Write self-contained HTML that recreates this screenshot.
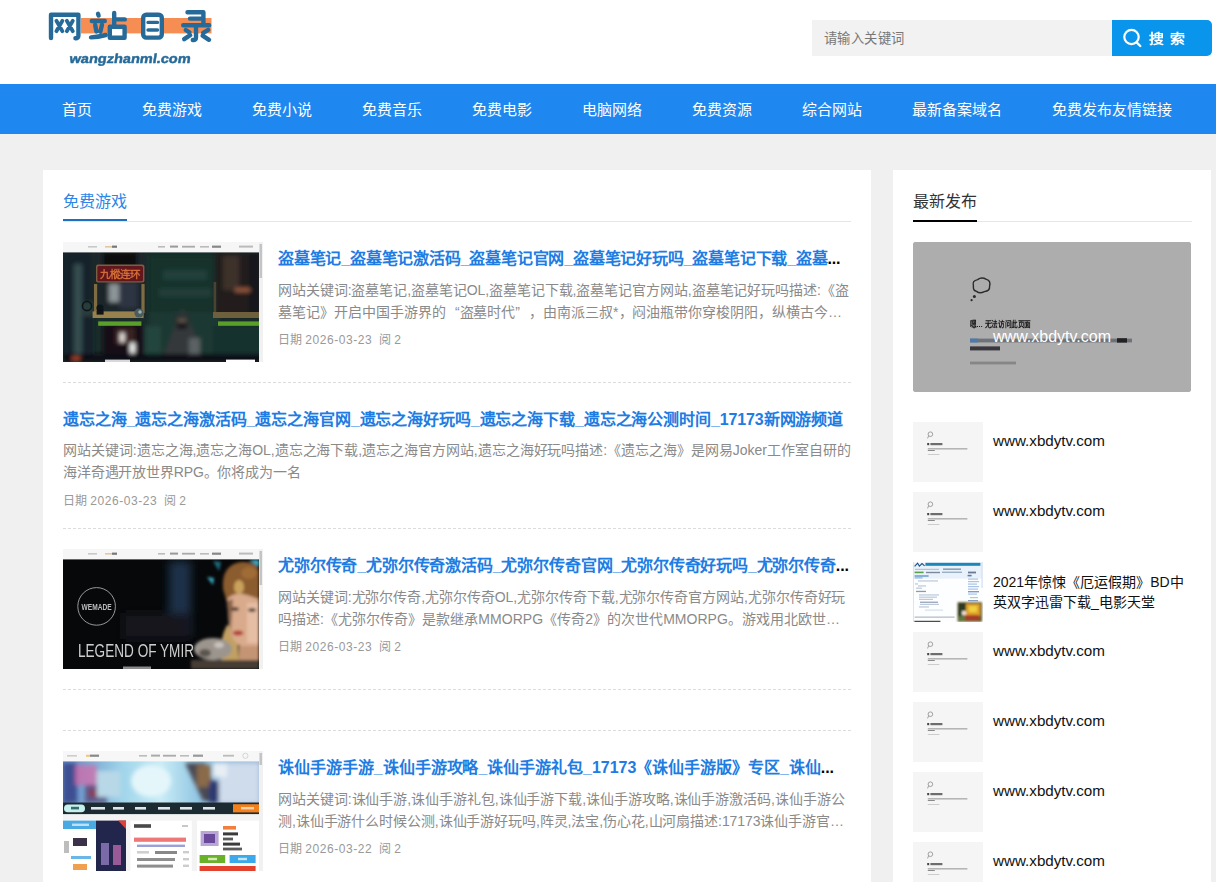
<!DOCTYPE html>
<html lang="zh-CN">
<head>
<meta charset="utf-8">
<title>网站目录</title>
<style>
*{box-sizing:border-box;margin:0;padding:0}
html,body{width:1216px;height:882px;overflow:hidden}
body{background:#f0f0f0;font-family:"Liberation Sans",sans-serif;color:#333;position:relative}
a{text-decoration:none;color:inherit}
.abs{position:absolute}
/* header */
#hd{position:absolute;left:0;top:0;width:1216px;height:84px;background:#fff}
#logo{position:absolute;left:40px;top:0;width:180px;height:76px}
#sin{position:absolute;left:812px;top:20px;width:300px;height:36px;background:#f2f2f2;color:#777;font-size:13.33px;line-height:37px;padding-left:12px;white-space:nowrap;letter-spacing:.4px}
#sbt{position:absolute;left:1112px;top:20px;width:100px;height:36px;background:#0a95ec;border-radius:0 5px 5px 0;color:#fff}
#sbt svg{position:absolute;left:10px;top:7px}
#sbt span{position:absolute;left:37px;top:1px;line-height:36px;font-size:15px;font-weight:bold;white-space:pre;word-spacing:1.5px;transform:scaleY(.86);transform-origin:50% 50%}
/* nav */
#nav{position:absolute;left:0;top:84px;width:1216px;height:50px;background:#1e87f0}
#nav a{position:absolute;top:1px;line-height:50px;font-size:15px;color:#fff;white-space:nowrap}
/* cards */
#main{position:absolute;left:43px;top:170px;width:828px;height:712px;background:#fff}
#side{position:absolute;left:893px;top:170px;width:318px;height:712px;background:#fff}
.hdg{margin-top:1px;position:absolute;font-size:16px;line-height:22px;white-space:nowrap}
.ttl{margin-top:1px;position:absolute;font-size:16px;font-weight:bold;line-height:32px;color:#000;white-space:nowrap;overflow:hidden}
.ttl a{color:#207ce2}
.dsc{position:absolute;font-size:14px;line-height:22px;color:#8a8a8a;white-space:nowrap;overflow:hidden}
.dt{position:absolute;font-size:12px;line-height:16px;color:#999;white-space:pre;margin-top:1px}
.dg{letter-spacing:.56px}
.q{display:inline-block;width:14px}
.dash{position:absolute;left:63px;width:788px;height:0;border-top:1px dashed #dcdcdc}
.th{position:absolute;left:913px;width:70px;height:60px;background:#f5f5f5;overflow:hidden}
.st{position:absolute;left:993px;font-size:15.2px;line-height:20px;margin-top:-1px;color:#111;white-space:nowrap}
.pic{position:absolute;left:63px;width:200px;height:120px;overflow:hidden}
</style>
</head>
<body>
<!-- HEADER -->
<div id="hd">
  <div id="logo"><svg width="180" height="76" viewBox="40 0 180 76" style="position:absolute;left:0;top:0">
<defs><filter id="lb" x="-5%" y="-5%" width="110%" height="110%"><feGaussianBlur stdDeviation="0.5"/></filter></defs>
<g filter="url(#lb)">
<rect x="81" y="18" width="130.5" height="15.4" fill="#f68d52"/>
<g fill="none" stroke="#286b99" stroke-width="4.4" stroke-linecap="round" stroke-linejoin="round">
<!-- 网 -->
<path d="M51 38 V14.7 H78.4 V35.4 Q78.4 38.4 75.4 38.2"/>
<path d="M56.4 20.8 L62.4 31.2 M62.4 20.8 L56.4 31.2 M66.8 20.8 L72.8 31.2 M72.8 20.8 L66.8 31.2" stroke-width="3.8"/>
<!-- 站 -->
<path d="M98 13.8 L98.6 15.6 M91.8 21 H104.8 M95.2 25 L96.4 31.4 M102 24.8 L100.4 31.6 M91 37.4 Q98 37 105.8 35"/>
<path d="M109.8 26.8 H124.6 V37.8 H109.8 Z" fill="#fff"/><path d="M114.2 13 V25.6 M114.2 19.4 H124.8"/>
<!-- 目 -->
<rect x="143.2" y="14.8" width="18.6" height="22.8" rx="3" fill="#fff"/>
<path d="M148 22.4 H157.5 M148 30 H157.5" stroke-width="3.4"/>
<!-- 录 -->
<path d="M187.5 12.2 H203.4 V24.6 M190 18.6 H203.4 M183.2 25.2 H209.2 M196 25.2 V37.5 Q196 40.4 192.8 40" />
<path d="M185.8 30 L189.4 32.4 M184.2 39.2 L190.2 35.2 M208.2 29.8 L203.2 32.8 M202.6 35.6 L209 39.8" />
</g>
<g transform="translate(69 62.5) skewX(-9) scale(1.12 1)"><text x="0" y="0" font-family="Liberation Sans, sans-serif" font-size="13" font-weight="bold" fill="#286b99" stroke="#286b99" stroke-width="0.45">wangzhanml.com</text></g>
</g>
</svg>
</div>
  <div id="sin">请输入关键词</div>
  <div id="sbt">
    <svg width="22" height="22" viewBox="0 0 22 22"><circle cx="9.5" cy="10" r="7.2" fill="none" stroke="#fff" stroke-width="2.2"/><path d="M14.6 15.4 L18.3 19" stroke="#fff" stroke-width="2.3" stroke-linecap="round"/></svg>
    <span>搜 索</span>
  </div>
</div>
<!-- NAV -->
<div id="nav">
  <a style="left:62px">首页</a>
  <a style="left:142px">免费游戏</a>
  <a style="left:252px">免费小说</a>
  <a style="left:362px">免费音乐</a>
  <a style="left:472px">免费电影</a>
  <a style="left:582px">电脑网络</a>
  <a style="left:692px">免费资源</a>
  <a style="left:802px">综合网站</a>
  <a style="left:912px">最新备案域名</a>
  <a style="left:1052px">免费发布友情链接</a>
</div>
<!-- CARDS -->
<div id="main"></div>
<div id="side"></div>

<!-- MAIN heading -->
<div class="hdg" style="left:63px;top:190px;color:#2a86e8">免费游戏</div>
<div class="abs" style="left:63px;top:221px;width:788px;height:1px;background:#e6e6e6"></div>
<div class="abs" style="left:63px;top:219px;width:64px;height:2px;background:#1c6fc2"></div>

<!-- ARTICLE 1 -->
<div class="pic" style="top:242px" id="p1"><svg width="200" height="120" viewBox="0 0 200 120" style="display:block">
<defs><filter id="b1" x="-3%" y="-3%" width="106%" height="106%"><feGaussianBlur stdDeviation="0.7"/></filter>
<filter id="b2" x="-10%" y="-10%" width="120%" height="120%"><feGaussianBlur stdDeviation="2"/></filter></defs>
<rect width="200" height="120" fill="#192d2b"/>
<g filter="url(#b2)">
<rect x="0" y="10" width="30" height="110" fill="#14242a"/>
<rect x="11" y="22" width="8" height="90" fill="#364d50"/>
<rect x="20" y="60" width="10" height="14" fill="#2c3c3e"/>
<rect x="32" y="10" width="50" height="62" fill="#1c252c"/>
<rect x="40" y="10" width="34" height="14" fill="#07090b"/>
<rect x="46" y="42" width="12" height="18" fill="#8c9498"/>
<rect x="56" y="40" width="18" height="26" fill="#2f3642"/>
<rect x="86" y="14" width="66" height="56" fill="#18312c"/>
<rect x="100" y="28" width="44" height="10" fill="#23403a"/>
<rect x="96" y="46" width="52" height="9" fill="#213e38"/>
<rect x="86" y="70" width="70" height="42" fill="#1b3731"/>
<rect x="82" y="84" width="16" height="28" fill="#22443c"/>
<rect x="150" y="84" width="50" height="30" fill="#18302e"/>
<rect x="152" y="10" width="46" height="64" fill="#221d1b"/>
<rect x="160" y="14" width="16" height="34" fill="#3e332b"/>
<rect x="186" y="12" width="12" height="60" fill="#14161c"/>
<rect x="172" y="46" width="15" height="4" fill="#96583e"/>
<rect x="40" y="82" width="40" height="36" fill="#171012"/>
<rect x="52" y="86" width="20" height="16" fill="#3a2220"/>
<rect x="57" y="91" width="4.6" height="9" fill="#f0e8e4"/>
<rect x="67" y="101" width="5" height="10" fill="#f2f2f2"/>
<path d="M119 66 L101 112 H138 L132 92 Z" fill="#34393b"/><rect x="126" y="96" width="11" height="16" fill="#5c6264"/>
<rect x="112" y="72" width="14" height="12" fill="#2a3032"/>
<rect x="114" y="80" width="10" height="7" fill="#15181a"/>
<rect x="115" y="77" width="8" height="3" fill="#6a5c50"/>
<rect x="0" y="112" width="200" height="8" fill="#0a1113"/>
<rect x="9" y="115" width="8" height="3.4" fill="#b8482a"/>
</g>
<g filter="url(#b1)">
<rect x="31" y="42" width="3.2" height="29" fill="#7f6c42"/><rect x="78.4" y="42" width="3.2" height="29" fill="#7f6c42"/>
<rect x="29.6" y="69.4" width="51" height="6.6" fill="#98814e"/>
<rect x="150" y="70" width="46" height="6" fill="#6e5f3c"/><rect x="150.6" y="40" width="2.6" height="30" fill="#4c4230"/>
<rect x="33" y="22.6" width="48.4" height="18" rx="2" fill="#7a5e44"/>
<rect x="34.4" y="24" width="45.6" height="15.2" rx="1.5" fill="#64181a"/>
<text x="57.2" y="35.8" font-size="10.5" font-weight="bold" text-anchor="middle" fill="#cf6c38" font-family="Liberation Sans, sans-serif">九樅连环</text>
<rect x="35.2" y="79.4" width="43.2" height="4.4" fill="#5a9f2c"/>
<rect x="155" y="79.4" width="41" height="4.4" fill="#5a9f2c"/>
<circle cx="37" cy="66" r="3.6" fill="#101214"/><rect x="33.6" y="68.6" width="7" height="4" fill="#101214"/><circle cx="76" cy="71" r="4.6" fill="#4c5c5e"/><circle cx="77" cy="70" r="1.8" fill="#9ab0b2"/>
<circle cx="24" cy="64" r="4.6" fill="none" stroke="#0e1618" stroke-width="1.6"/>
<rect x="0" y="0" width="200" height="10.4" fill="#f6f6f6"/>
<rect x="25" y="4" width="9" height="1.6" fill="#c8c8c8"/><rect x="42" y="4" width="7" height="1.6" fill="#e0c9a0"/><rect x="49" y="3.6" width="5" height="2.2" fill="#777"/>
<rect x="95" y="4" width="7" height="1.6" fill="#bbb"/><rect x="107" y="3.6" width="8" height="2" fill="#999"/><rect x="119" y="3.8" width="13" height="1.8" fill="#aaa"/><rect x="137" y="4" width="9" height="1.6" fill="#bbb"/><rect x="149" y="3.6" width="9" height="2.2" fill="#888"/>
<rect x="176" y="3.6" width="14" height="2" fill="#bbb"/>
<rect x="163" y="117.6" width="29" height="2.4" fill="#fff"/>
<rect x="42" y="117.6" width="25" height="2.4" fill="#d8d8d8"/>
<rect x="196" y="0" width="4" height="120" fill="#f1f1f1"/><rect x="196.5" y="2" width="2.5" height="34" fill="#c4c4c4"/>
</g>
</svg>
</div>
<div class="ttl" style="letter-spacing:-0.19px;left:278px;top:242px;width:573px"><a>盗墓笔记_盗墓笔记激活码_盗墓笔记官网_盗墓笔记好玩吗_盗墓笔记下载_盗墓</a>...</div>
<div class="dsc" style="letter-spacing:-0.072px;left:278px;top:279px;width:573px">网站关键词:盗墓笔记,盗墓笔记OL,盗墓笔记下载,盗墓笔记官方网站,盗墓笔记好玩吗描述:《盗</div>
<div class="dsc" style="letter-spacing:-0.041px;left:278px;top:301px;width:573px">墓笔记》开启中国手游界的<span class="q" style="text-align:right">“</span>盗墓时代<span class="q" style="text-align:left">”</span>，由南派三叔*，闷油瓶带你穿梭阴阳，纵横古今…</div>
<div class="dt" style="left:278px;top:331px">日期 <span class="dg">2026-03-23</span>  阅 2</div>
<div class="dash" style="top:382px"></div>

<!-- ARTICLE 2 -->
<div class="ttl" style="letter-spacing:-0.107px;left:63px;top:403px;width:788px"><a>遗忘之海_遗忘之海激活码_遗忘之海官网_遗忘之海好玩吗_遗忘之海下载_遗忘之海公测时间_17173新网游频道</a></div>
<div class="dsc" style="letter-spacing:-0.042px;left:63px;top:439px;width:788px">网站关键词:遗忘之海,遗忘之海OL,遗忘之海下载,遗忘之海官方网站,遗忘之海好玩吗描述:《遗忘之海》是网易Joker工作室自研的</div>
<div class="dsc" style="letter-spacing:-0.156px;left:63px;top:461px;width:788px">海洋奇遇开放世界RPG。你将成为一名</div>
<div class="dt" style="left:63px;top:492px">日期 <span class="dg">2026-03-23</span>  阅 2</div>
<div class="dash" style="top:528px"></div>

<!-- ARTICLE 3 -->
<div class="pic" style="top:549px" id="p3"><svg width="200" height="120" viewBox="0 0 200 120" style="display:block">
<defs><filter id="c1" x="-3%" y="-3%" width="106%" height="106%"><feGaussianBlur stdDeviation="0.6"/></filter>
<filter id="c2" x="-15%" y="-15%" width="130%" height="130%"><feGaussianBlur stdDeviation="1.5"/></filter>
<filter id="c3" x="-15%" y="-15%" width="130%" height="130%"><feGaussianBlur stdDeviation="5"/></filter></defs>
<rect width="200" height="120" fill="#07080a"/>
<g filter="url(#c3)">
<rect x="106" y="12" width="22" height="76" fill="#1f3348"/>
<rect x="60" y="64" width="66" height="26" fill="#14171c"/>
</g>
<g filter="url(#c2)">
<path d="M144 28 L150 36 L151 29 Z" fill="#3ab0c8"/><path d="M186 11 H196 V18 Z" fill="#3ab0c8"/><path d="M150 12 L156 22 L158 13 Z" fill="#1f6a80"/>
<path d="M160 40 Q158 16 178 13 Q194 12 196 22 V50 L180 46 L166 60 Z" fill="#8a5c2e"/>
<ellipse cx="176" cy="38" rx="5" ry="7" fill="#caa25c"/>
<ellipse cx="186" cy="24" rx="8" ry="6" fill="#a06c34"/>
<path d="M164 76 Q156 90 158 111 H176 L174 80 Z" fill="#c2a062"/>
<path d="M164 50 Q172 42 184 46 L196 50 V100 L178 98 Q168 92 166 76 Z" fill="#d9aa8c"/>
<rect x="184" y="54" width="12" height="40" fill="#e6bea4"/>
<path d="M164 52 L170 50 L168 84 Z" fill="#8a6248"/>
<ellipse cx="172" cy="60" rx="4" ry="1.8" fill="#3a2c22"/><ellipse cx="189" cy="61" rx="4" ry="1.8" fill="#3a2c22"/>
<ellipse cx="175" cy="84" rx="5.4" ry="2.4" fill="#b23a30"/>
<rect x="176" y="97" width="20" height="14" fill="#c49474"/>
<ellipse cx="150" cy="100" rx="19" ry="11" fill="#9c958e"/>
<ellipse cx="142" cy="104" rx="6" ry="4" fill="#5a544e"/><ellipse cx="156" cy="96" rx="5" ry="3" fill="#c8c2bc"/>
<rect x="128" y="111" width="68" height="9" fill="#463d36"/>
</g>
<g filter="url(#c1)">
<circle cx="33.6" cy="57.4" r="18.8" fill="none" stroke="#a8a8a8" stroke-width="0.9"/>
<text x="33.6" y="61" font-size="9.5" font-weight="bold" text-anchor="middle" fill="#bdbdbd" font-family="Liberation Sans, sans-serif" textLength="30" lengthAdjust="spacingAndGlyphs">WEMADE</text>
<text x="15" y="108" font-size="18.5" fill="#cfcfcf" font-family="Liberation Sans, sans-serif" textLength="116" lengthAdjust="spacingAndGlyphs">LEGEND OF YMIR</text>
<rect x="60" y="117.5" width="28" height="2.5" fill="#8a8a8a"/>
<rect x="0" y="0" width="200" height="10.4" fill="#f6f6f6"/>
<rect x="25" y="4" width="9" height="1.6" fill="#c8c8c8"/><rect x="42" y="4" width="7" height="1.6" fill="#e0c9a0"/><rect x="49" y="3.6" width="5" height="2.2" fill="#777"/>
<rect x="95" y="4" width="7" height="1.6" fill="#bbb"/><rect x="107" y="3.6" width="8" height="2" fill="#999"/><rect x="119" y="3.8" width="13" height="1.8" fill="#aaa"/><rect x="137" y="4" width="9" height="1.6" fill="#bbb"/><rect x="149" y="3.6" width="9" height="2.2" fill="#888"/>
<rect x="176" y="3.6" width="14" height="2" fill="#bbb"/>
<rect x="196" y="0" width="4" height="120" fill="#f1f1f1"/><rect x="196.5" y="2" width="2.5" height="34" fill="#c4c4c4"/>
</g>
</svg>
</div>
<div class="ttl" style="letter-spacing:-0.155px;left:278px;top:549px;width:573px"><a>尤弥尔传奇_尤弥尔传奇激活码_尤弥尔传奇官网_尤弥尔传奇好玩吗_尤弥尔传奇</a>...</div>
<div class="dsc" style="letter-spacing:-0.06px;left:278px;top:586px;width:573px">网站关键词:尤弥尔传奇,尤弥尔传奇OL,尤弥尔传奇下载,尤弥尔传奇官方网站,尤弥尔传奇好玩</div>
<div class="dsc" style="letter-spacing:0.03px;left:278px;top:608px;width:573px">吗描述:《尤弥尔传奇》是款继承MMORPG《传奇2》的次世代MMORPG。游戏用北欧世…</div>
<div class="dt" style="left:278px;top:638px">日期 <span class="dg">2026-03-23</span>  阅 2</div>
<div class="dash" style="top:689px"></div>
<div class="dash" style="top:730px"></div>

<!-- ARTICLE 4 -->
<div class="pic" style="top:751px" id="p4"><svg width="200" height="120" viewBox="0 0 200 120" style="display:block">
<defs><filter id="d1" x="-3%" y="-3%" width="106%" height="106%"><feGaussianBlur stdDeviation="0.6"/></filter>
<filter id="d2" x="-15%" y="-15%" width="130%" height="130%"><feGaussianBlur stdDeviation="2.2"/></filter>
<linearGradient id="sky" x1="0" x2="1"><stop offset="0" stop-color="#5f86c0"/><stop offset="0.3" stop-color="#9fd4ea"/><stop offset="0.5" stop-color="#c9ecf6"/><stop offset="0.7" stop-color="#8fc4e2"/><stop offset="1" stop-color="#9fb8d8"/></linearGradient></defs>
<rect width="200" height="120" fill="#f3f3f3"/>
<rect x="0" y="10" width="196" height="42" fill="url(#sky)"/>
<g filter="url(#d2)">
<ellipse cx="88" cy="30" rx="20" ry="16" fill="#e4f6fa"/>
<rect x="0" y="12" width="14" height="40" fill="#3d4f92"/>
<rect x="12" y="14" width="22" height="20" fill="#d868a8" opacity=".7"/>
<rect x="22" y="34" width="22" height="18" fill="#5a5a8a"/>
<rect x="26" y="38" width="14" height="8" fill="#8a3a5a"/>
<rect x="34" y="20" width="24" height="26" fill="#b8d8e8"/>
<path d="M122 12 L142 12 L158 50 L140 50 Z" fill="#4a4a52"/>
<rect x="134" y="14" width="14" height="22" fill="#8a6a4a"/>
<rect x="146" y="30" width="12" height="22" fill="#2a3a72"/>
<rect x="156" y="12" width="40" height="40" fill="#cfdcec"/>
<rect x="150" y="12" width="14" height="14" fill="#e8eef4"/>
</g>
<g filter="url(#d1)">
<rect x="0" y="51.5" width="196" height="11.6" fill="#1f2a30"/>
<rect x="1" y="53.6" width="21" height="7.6" rx="3.8" fill="#c4f0ee"/>
<rect x="8" y="55.8" width="8" height="2.6" fill="#3a6a6a"/>
<rect x="28" y="56" width="14" height="2.6" fill="#dfe6ea"/><rect x="50" y="56" width="11" height="2.6" fill="#dfe6ea"/><rect x="72" y="56" width="11" height="2.6" fill="#dfe6ea"/><rect x="95" y="56" width="12" height="2.6" fill="#dfe6ea"/><rect x="117" y="56" width="12" height="2.6" fill="#dfe6ea"/><rect x="140" y="56" width="12" height="2.6" fill="#dfe6ea"/>
<rect x="170" y="53.2" width="26" height="8.2" fill="#f2801f"/><rect x="178" y="56" width="13" height="2.4" fill="#fbd0a8"/>
<!-- left panel -->
<rect x="0" y="69.6" width="33" height="50.4" fill="#fff"/>
<rect x="0" y="69.6" width="33" height="8.4" fill="#4aa9e2"/><rect x="9" y="72.6" width="17" height="2.4" fill="#bfe0f4"/>
<rect x="10" y="87" width="14" height="8" fill="#3a3048"/>
<rect x="1" y="90" width="5" height="12" fill="#bdbdbd"/>
<rect x="8" y="105" width="20" height="3" fill="#6ab6e6"/>
<rect x="10" y="113" width="14" height="6" fill="#f0a050"/>
<rect x="33" y="69.6" width="30" height="50.4" fill="#24264e"/>
<rect x="38" y="92" width="8" height="22" fill="#7a6aa8"/><rect x="50" y="94" width="8" height="20" fill="#9a5a98"/>
<path d="M55 69.6 H63 V78 Z" fill="#e0413a"/>
<!-- middle panel -->
<rect x="67.4" y="69.6" width="61.4" height="50.4" fill="#fff"/>
<rect x="71" y="73.2" width="17" height="3.6" fill="#4a4a4a"/><rect x="119" y="74" width="6" height="2" fill="#c8c8c8"/>
<rect x="71" y="86.6" width="52" height="4.2" fill="#ee7878"/>
<rect x="74" y="93.6" width="48" height="2.4" fill="#9aa0d8"/>
<rect x="74" y="100" width="12" height="2.6" fill="#cfcfcf"/><rect x="92" y="100" width="22" height="3" fill="#888"/><rect x="120" y="100" width="6" height="2.4" fill="#ccc"/>
<rect x="74" y="107" width="38" height="3" fill="#8e8e8e"/><rect x="120" y="107" width="6" height="2.4" fill="#ccc"/>
<rect x="74" y="113.6" width="36" height="3" fill="#8e8e8e"/><rect x="120" y="113.6" width="6" height="2.4" fill="#ccc"/>
<!-- right panel -->
<rect x="134" y="69.6" width="62" height="50.4" fill="#fff"/>
<rect x="137.6" y="80" width="18" height="15" fill="#b9a6d4"/><rect x="141" y="83" width="11" height="9" fill="#6a4a9a"/>
<rect x="160" y="75" width="13" height="3.6" fill="#f0803a"/>
<rect x="160" y="81.4" width="15" height="3" fill="#3a3a3a"/><rect x="160" y="86.6" width="10" height="2.8" fill="#5a5a5a"/><rect x="160" y="91.6" width="17" height="3" fill="#3a3a3a"/><rect x="160" y="96.6" width="19" height="2.8" fill="#5a5a5a"/>
<rect x="136.6" y="104" width="25.6" height="8" fill="#6bb12c"/><rect x="166.6" y="104" width="26" height="8" fill="#3aa9ea"/>
<rect x="145" y="106.8" width="9" height="2.4" fill="#d4ecb8"/><rect x="175" y="106.8" width="9" height="2.4" fill="#c4e4f8"/>
<rect x="136.6" y="115" width="56" height="5" fill="#e2432f"/>
<rect x="0" y="0" width="200" height="10.4" fill="#f7f7f7"/>
<rect x="4" y="4" width="10" height="1.6" fill="#ccc"/><rect x="23" y="3.8" width="4" height="2" fill="#ecc870"/><rect x="27" y="3.6" width="9" height="2.2" fill="#888"/>
<rect x="76" y="4" width="8" height="1.6" fill="#bbb"/><rect x="88" y="3.6" width="9" height="2" fill="#aaa"/><rect x="100" y="3.8" width="13" height="1.8" fill="#aaa"/><rect x="117" y="4" width="9" height="1.6" fill="#bbb"/><rect x="130" y="3.6" width="10" height="2.2" fill="#999"/>
<rect x="160" y="3.8" width="11" height="1.8" fill="#bbb"/><circle cx="182.4" cy="4.8" r="2.6" fill="none" stroke="#ccc" stroke-width="0.8"/>
<rect x="196" y="0" width="4" height="120" fill="#f1f1f1"/><rect x="196.5" y="2" width="2.5" height="12" fill="#c4c4c4"/>
</g>
</svg>
</div>
<div class="ttl" style="letter-spacing:-0.036px;left:278px;top:751px;width:573px"><a>诛仙手游手游_诛仙手游攻略_诛仙手游礼包_17173《诛仙手游版》专区_诛仙</a>...</div>
<div class="dsc" style="letter-spacing:-0.06px;left:278px;top:788px;width:573px">网站关键词:诛仙手游,诛仙手游礼包,诛仙手游下载,诛仙手游攻略,诛仙手游激活码,诛仙手游公</div>
<div class="dsc" style="letter-spacing:-0.09px;left:278px;top:810px;width:573px">测,诛仙手游什么时候公测,诛仙手游好玩吗,阵灵,法宝,伤心花,山河扇描述:17173诛仙手游官…</div>
<div class="dt" style="left:278px;top:840px">日期 <span class="dg">2026-03-22</span>  阅 2</div>

<!-- SIDEBAR -->
<svg width="0" height="0" style="position:absolute"><defs><filter id="tf" x="-3%" y="-3%" width="106%" height="106%"><feGaussianBlur stdDeviation="0.35"/></filter></defs></svg>
<div class="hdg" style="left:913px;top:190px;color:#333">最新发布</div>
<div class="abs" style="left:913px;top:221px;width:279px;height:1px;background:#e6e6e6"></div>
<div class="abs" style="left:913px;top:220px;width:64px;height:2px;background:#000"></div>
<div class="abs" id="big" style="left:913px;top:242px;width:278px;height:150px;background:#adadad;border-radius:3px;overflow:hidden"><svg width="278" height="150" viewBox="0 0 278 150" style="display:block">
<defs><filter id="e1" x="-3%" y="-3%" width="106%" height="106%"><feGaussianBlur stdDeviation="0.55"/></filter></defs>
<rect width="278" height="150" fill="#adadad"/>
<g filter="url(#e1)">
<path d="M60.4 44 Q59 38.6 64.6 37.6 Q68.6 34.6 73.4 37.4 Q78 38.6 76.6 44.2 Q77 48.8 71.4 49.6 Q66.6 52 63.6 49.4 Q59.8 48.6 60.4 44 Z" fill="none" stroke="#2b2b2b" stroke-width="1.4"/>
<circle cx="61.4" cy="54.4" r="1.5" fill="#2b2b2b"/><circle cx="58.6" cy="58.2" r="1.1" fill="#2b2b2b"/>
<text x="56.6" y="85.4" font-size="8" font-weight="bold" fill="#141414" font-family="Liberation Sans, sans-serif" textLength="61.5" lengthAdjust="spacingAndGlyphs">嗯… 无法访问此页面</text>
<rect x="57" y="96.6" width="162" height="3.8" fill="#5a6068" opacity=".75"/><rect x="57" y="96.6" width="8" height="3.8" fill="#4a7ab0"/><rect x="204" y="96.2" width="10" height="4.4" fill="#222"/>
<rect x="57" y="104.4" width="30" height="4" fill="#26262a" opacity=".85"/>
<rect x="57" y="119.6" width="46" height="2.8" fill="#7c7c7c" opacity=".8"/>
</g>
<text x="139" y="100.4" font-size="16" text-anchor="middle" fill="#fff" font-family="Liberation Sans, sans-serif">www.xbdytv.com</text>
</svg>
</div>

<div class="th" style="top:422px"><svg width="70" height="60" viewBox="0 0 70 60" style="display:block"><g filter="url(#tf)"><circle cx="17.4" cy="12.2" r="2.3" fill="none" stroke="#8c8c8c" stroke-width="0.8"/><path d="M15.6 13.8 L14.6 16.4" stroke="#8c8c8c" stroke-width="0.8"/><rect x="14.2" y="21" width="2" height="2.2" fill="#444"/><rect x="17.4" y="21" width="12" height="2.2" fill="#555" opacity=".85"/><rect x="14.8" y="26.3" width="39.6" height="1.1" fill="#9a9a9a"/><rect x="14.8" y="28" width="7" height="1" fill="#8a8a8a"/><rect x="14.8" y="32" width="11.6" height="1" fill="#cdcdcd"/></g></svg></div><div class="st" style="top:432px">www.xbdytv.com</div>
<div class="th" style="top:492px"><svg width="70" height="60" viewBox="0 0 70 60" style="display:block"><g filter="url(#tf)"><circle cx="17.4" cy="12.2" r="2.3" fill="none" stroke="#8c8c8c" stroke-width="0.8"/><path d="M15.6 13.8 L14.6 16.4" stroke="#8c8c8c" stroke-width="0.8"/><rect x="14.2" y="21" width="2" height="2.2" fill="#444"/><rect x="17.4" y="21" width="12" height="2.2" fill="#555" opacity=".85"/><rect x="14.8" y="26.3" width="39.6" height="1.1" fill="#9a9a9a"/><rect x="14.8" y="28" width="7" height="1" fill="#8a8a8a"/><rect x="14.8" y="32" width="11.6" height="1" fill="#cdcdcd"/></g></svg></div><div class="st" style="top:502px">www.xbdytv.com</div>
<div class="th" style="top:562px;background:#fff" id="th3"><svg width="70" height="60" viewBox="0 0 70 60" style="display:block">
<defs><filter id="g1" x="-3%" y="-3%" width="106%" height="106%"><feGaussianBlur stdDeviation="0.45"/></filter><filter id="g2" x="-15%" y="-15%" width="130%" height="130%"><feGaussianBlur stdDeviation="1.3"/></filter></defs>
<rect width="70" height="60" fill="#fdfeff"/>
<g filter="url(#g1)">
<rect x="0.6" y="0.6" width="68.4" height="16" fill="#e9f2fa"/>
<rect x="12.4" y="0.8" width="55" height="3" fill="#1f86b6"/>
<path d="M1.6 4.4 L4.6 1.2 L6.4 4.2 L9 1.6 L11.6 3.8" fill="none" stroke="#1e4f86" stroke-width="1.1"/>
<rect x="2" y="6.8" width="24" height="1.2" fill="#b4c4d4"/><rect x="30" y="6.4" width="18" height="1.6" fill="#8aa0b4"/>
<rect x="1.6" y="9.6" width="9" height="1.6" fill="#5aa04a"/><rect x="13" y="9.8" width="14" height="1.4" fill="#7a8a9a"/><rect x="29" y="9.6" width="20" height="1.4" fill="#9ab0c4"/><rect x="55" y="9.6" width="8" height="1.8" fill="#6a7a90"/>
<rect x="1.6" y="13.4" width="14" height="1.2" fill="#4a88c4"/><rect x="1.6" y="15.4" width="8" height="1" fill="#7aa8d8"/>
<rect x="54.6" y="12.8" width="4" height="1.6" fill="#5a7ab0"/>
<g fill="#a9c3e6"><rect x="55" y="16.5" width="10" height="1.2"/><rect x="55" y="19" width="11" height="1.2"/><rect x="55" y="21.5" width="9" height="1.2"/><rect x="55" y="24" width="11" height="1.2"/><rect x="55" y="26.5" width="10" height="1.2"/><rect x="55" y="29" width="11" height="1.4" fill="#7a9cd0"/><rect x="55" y="31.5" width="9" height="1.2"/><rect x="57" y="35" width="8" height="1.2" fill="#b4d0b4"/><rect x="55" y="38" width="10" height="1.2" fill="#8aa4cc"/></g>
<g fill="#b7c4d6"><rect x="5" y="18.4" width="20" height="1.1"/><rect x="2" y="21.4" width="3" height="1.1"/><rect x="5" y="23.4" width="8" height="1.1"/><rect x="3" y="25.6" width="6" height="1.1"/><rect x="3" y="28.8" width="10" height="1.3" fill="#8a9ab0"/><rect x="6" y="32.4" width="20" height="1.1"/><rect x="6" y="34.6" width="18" height="1.1"/><rect x="6" y="36.8" width="14" height="1.1"/><rect x="7" y="39.6" width="18" height="1.3" fill="#97a6bc"/><rect x="7" y="41.8" width="19" height="1.1"/><rect x="6" y="44.4" width="10" height="1.1"/><rect x="12" y="47.6" width="18" height="1" fill="#d0dae6"/></g>
<rect x="1.6" y="54.6" width="40" height="1" fill="#a4aab4"/>
<rect x="1.4" y="58.8" width="26" height="1" fill="#222"/>
<rect x="0" y="0" width="0.8" height="60" fill="#cfe0f0"/><rect x="68.6" y="0" width="0.9" height="26" fill="#c4d8ee"/>
</g>
<g filter="url(#g2)">
<rect x="44.6" y="40.2" width="24.4" height="19.6" fill="#6a5a2a"/>
<rect x="45" y="41" width="8" height="14" fill="#2a3a22"/>
<rect x="53" y="42" width="14" height="12" fill="#e0a028"/>
<rect x="56" y="44" width="8" height="6" fill="#f0d040"/>
<rect x="50" y="53" width="16" height="5" fill="#a83a2a"/>
<rect x="46" y="54" width="6" height="5" fill="#5a7a3a"/>
<rect x="49" y="49" width="4" height="4" fill="#e8e0d0"/>
</g>
</svg>
</div><div class="st" style="top:573px;font-size:14px">2021年惊悚《厄运假期》BD中<br>英双字迅雷下载_电影天堂</div>
<div class="th" style="top:632px"><svg width="70" height="60" viewBox="0 0 70 60" style="display:block"><g filter="url(#tf)"><circle cx="17.4" cy="12.2" r="2.3" fill="none" stroke="#8c8c8c" stroke-width="0.8"/><path d="M15.6 13.8 L14.6 16.4" stroke="#8c8c8c" stroke-width="0.8"/><rect x="14.2" y="21" width="2" height="2.2" fill="#444"/><rect x="17.4" y="21" width="12" height="2.2" fill="#555" opacity=".85"/><rect x="14.8" y="26.3" width="39.6" height="1.1" fill="#9a9a9a"/><rect x="14.8" y="28" width="7" height="1" fill="#8a8a8a"/><rect x="14.8" y="32" width="11.6" height="1" fill="#cdcdcd"/></g></svg></div><div class="st" style="top:642px">www.xbdytv.com</div>
<div class="th" style="top:702px"><svg width="70" height="60" viewBox="0 0 70 60" style="display:block"><g filter="url(#tf)"><circle cx="17.4" cy="12.2" r="2.3" fill="none" stroke="#8c8c8c" stroke-width="0.8"/><path d="M15.6 13.8 L14.6 16.4" stroke="#8c8c8c" stroke-width="0.8"/><rect x="14.2" y="21" width="2" height="2.2" fill="#444"/><rect x="17.4" y="21" width="12" height="2.2" fill="#555" opacity=".85"/><rect x="14.8" y="26.3" width="39.6" height="1.1" fill="#9a9a9a"/><rect x="14.8" y="28" width="7" height="1" fill="#8a8a8a"/><rect x="14.8" y="32" width="11.6" height="1" fill="#cdcdcd"/></g></svg></div><div class="st" style="top:712px">www.xbdytv.com</div>
<div class="th" style="top:772px"><svg width="70" height="60" viewBox="0 0 70 60" style="display:block"><g filter="url(#tf)"><circle cx="17.4" cy="12.2" r="2.3" fill="none" stroke="#8c8c8c" stroke-width="0.8"/><path d="M15.6 13.8 L14.6 16.4" stroke="#8c8c8c" stroke-width="0.8"/><rect x="14.2" y="21" width="2" height="2.2" fill="#444"/><rect x="17.4" y="21" width="12" height="2.2" fill="#555" opacity=".85"/><rect x="14.8" y="26.3" width="39.6" height="1.1" fill="#9a9a9a"/><rect x="14.8" y="28" width="7" height="1" fill="#8a8a8a"/><rect x="14.8" y="32" width="11.6" height="1" fill="#cdcdcd"/></g></svg></div><div class="st" style="top:782px">www.xbdytv.com</div>
<div class="th" style="top:842px"><svg width="70" height="60" viewBox="0 0 70 60" style="display:block"><g filter="url(#tf)"><circle cx="17.4" cy="12.2" r="2.3" fill="none" stroke="#8c8c8c" stroke-width="0.8"/><path d="M15.6 13.8 L14.6 16.4" stroke="#8c8c8c" stroke-width="0.8"/><rect x="14.2" y="21" width="2" height="2.2" fill="#444"/><rect x="17.4" y="21" width="12" height="2.2" fill="#555" opacity=".85"/><rect x="14.8" y="26.3" width="39.6" height="1.1" fill="#9a9a9a"/><rect x="14.8" y="28" width="7" height="1" fill="#8a8a8a"/><rect x="14.8" y="32" width="11.6" height="1" fill="#cdcdcd"/></g></svg></div><div class="st" style="top:852px">www.xbdytv.com</div>
</body>
</html>
